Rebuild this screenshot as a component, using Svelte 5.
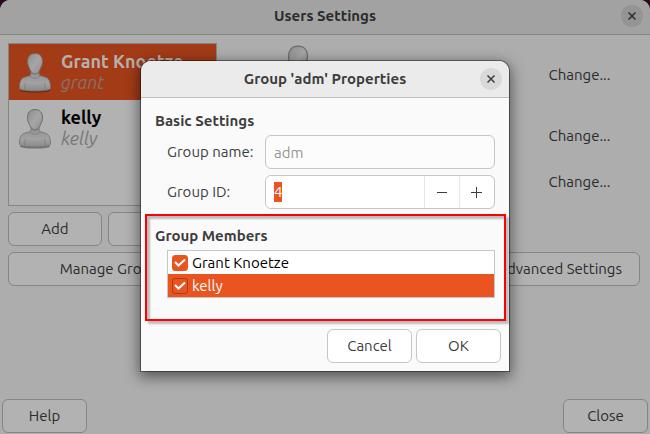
<script lang="ts">
	import { onMount } from 'svelte';

	let users = [
		{ name: 'Grant Knoetze', login: 'grant' },
		{ name: 'kelly', login: 'kelly' }
	];
	let members = [
		{ name: 'Grant Knoetze', checked: true },
		{ name: 'kelly', checked: true }
	];
	let selectedUser = 0;
	let selectedMember = 1;
	let groupName = 'adm';
	let groupId = 4;
	let idInput: HTMLInputElement;

	onMount(() => {
		idInput.focus();
		idInput.select();
	});
</script>

{#snippet avatar(size, box)}
	<svg class="avatar" width={size} height={size} viewBox={box} aria-hidden="true">
		<defs>
			<linearGradient id="body{size}" x1="0" y1="0" x2="0" y2="1">
				<stop offset="0" stop-color="#8e8e8e" />
				<stop offset="0.6" stop-color="#a2a2a2" />
				<stop offset="1" stop-color="#898989" />
			</linearGradient>
			<linearGradient id="head{size}" x1="0" y1="0" x2="1" y2="1">
				<stop offset="0" stop-color="#8c8c8c" />
				<stop offset="0.5" stop-color="#a6a6a6" />
				<stop offset="1" stop-color="#8f8f8f" />
			</linearGradient>
		</defs>
		<ellipse cx="24" cy="42.5" rx="15" ry="2" fill="#000" opacity="0.35" />
		<path
			d="M20 23v2c0 2-1 3-4 3.500-5 1-7 3-7.500 9.500v2c0 2 5 3 15.500 3s15.500-1 15.500-3v-2c-.5-6.500-2.500-8.500-7.500-9.500-3-.5-4-1.500-4-3.500v-2z"
			fill="url(#body{size})"
			stroke="#707070"
			stroke-width="0.8"
		/>
		<path d="M13.500 42l.8-7M34.500 42l-.8-7" fill="none" stroke="#7c7c7c" stroke-width="0.8" />
		<path d="M19 28c2 3 8 3 10 0" fill="none" stroke="#7c7c7c" stroke-width="0.8" />
		<path
			d="M24 5.500c-5 0-7.500 3.500-7.500 8 0 3 1 5 2 7 1 3 3 5.500 5.500 5.500s4.500-2.500 5.500-5.500c1-2 2-4 2-7 0-4.500-2.500-8-7.500-8z"
			fill="url(#head{size})"
			stroke="#6a6a6a"
		/>
	</svg>
{/snippet}

{#snippet cross()}
	<svg width="8" height="8" viewBox="0 0 8 8" aria-hidden="true">
		<path d="M.5.5l7 7M7.5.5l-7 7" fill="none" stroke="currentColor" stroke-width="1.5" />
	</svg>
{/snippet}

<div class="desktop">
	<main class="window">
		<header class="titlebar">
			<h1>Users Settings</h1>
			<button class="close" aria-label="Close window">{@render cross()}</button>
		</header>

		<div class="content">
			<div class="sidebar">
				<ul class="users">
					{#each users as user, i}
						<li class:selected={i === selectedUser}>
							{@render avatar(48, '0 0 48 48')}
							<div>
								<strong>{user.name}</strong>
								<em>{user.login}</em>
							</div>
						</li>
					{/each}
				</ul>
				<div class="pair">
					<button class="btn">Add</button>
					<button class="btn" aria-label="Delete"></button>
				</div>
				<button class="btn">Manage Groups</button>
			</div>

			<div class="details">
				<div class="detail first">
					{@render avatar(56, '2 3 44 44')}
					<button class="flat">Change...</button>
				</div>
				<div class="detail"><button class="flat">Change...</button></div>
				<div class="detail"><button class="flat">Change...</button></div>
				<button class="btn advanced">Advanced Settings</button>
			</div>
		</div>

		<footer>
			<button class="btn small">Help</button>
			<button class="btn small">Close</button>
		</footer>
	</main>

	<div class="dialog" role="dialog" aria-labelledby="dialog-title">
		<header class="titlebar">
			<h2 id="dialog-title">Group '{groupName}' Properties</h2>
			<button class="close" aria-label="Close dialog">{@render cross()}</button>
		</header>

		<section class="basic">
			<h3>Basic Settings</h3>
			<div class="field">
				<label for="group-name">Group name:</label>
				<input id="group-name" type="text" value={groupName} disabled />
			</div>
			<div class="field">
				<label for="group-id">Group ID:</label>
				<div class="spin">
					<input id="group-id" type="text" inputmode="numeric" bind:value={groupId} bind:this={idInput} />
					<button aria-label="Decrease" on:click={() => groupId--}>
						<svg width="12" height="12" viewBox="0 0 12 12"><path d="M1 6.5h10" stroke="currentColor" /></svg>
					</button>
					<button aria-label="Increase" on:click={() => groupId++}>
						<svg width="12" height="12" viewBox="0 0 12 12"><path d="M0 6.5h11M5.5 1v11" stroke="currentColor" /></svg>
					</button>
				</div>
			</div>
		</section>

		<section class="members">
			<h3>Group Members</h3>
			<ul>
				{#each members as member, i}
					<li class:selected={i === selectedMember}>
						<label>
							<input type="checkbox" bind:checked={member.checked} />
							{member.name}
						</label>
					</li>
				{/each}
			</ul>
		</section>

		<div class="actions">
			<button class="btn small">Cancel</button>
			<button class="btn small">OK</button>
		</div>
	</div>
</div>

<style>
	:global(body) {
		background: #2a0a20;
	}

	.desktop {
		position: relative;
		font: 15px/20px Ubuntu, "Noto Sans", sans-serif;
		color: #3d3d3d;
	}

	.desktop * {
		box-sizing: border-box;
	}

	h1,
	h2,
	h3,
	ul {
		margin: 0;
		padding: 0;
		list-style: none;
		font-size: 15px;
	}

	button,
	input {
		margin: 0;
		font: inherit;
		color: inherit;
	}

	button {
		padding: 0;
		border: 0;
		background: none;
		white-space: nowrap;
	}

	svg {
		display: block;
		flex: none;
	}

	.window {
		display: flex;
		flex-direction: column;
		box-sizing: border-box;
		min-height: 100vh;
		border-radius: 10px 10px 0 0;
		background: #adadad;
		color: #2b2b2b;
	}

	.titlebar {
		display: grid;
		grid-template-columns: 1fr auto 1fr;
		align-items: center;
		height: 35px;
		padding: 0 7px 2px;
		border-bottom: 1px solid #858585;
		border-radius: 10px 10px 0 0;
		background: #a2a2a2;
	}

	.titlebar h1,
	.titlebar h2 {
		grid-column: 2;
	}

	.close {
		display: grid;
		place-items: center;
		justify-self: end;
		width: 22px;
		height: 22px;
		border-radius: 50%;
		background: #949494;
	}

	.content {
		display: grid;
		grid-template-columns: 209px 1fr;
		gap: 48px;
		padding: 8px 10px 8px 8px;
	}

	.sidebar {
		display: flex;
		flex-direction: column;
		gap: 6px;
	}

	.users {
		height: 163px;
		border: 1px solid #858585;
		background: #b2b2b2;
	}

	.users li {
		display: flex;
		align-items: center;
		gap: 2px;
		height: 56px;
		padding-left: 2px;
		white-space: nowrap;
	}

	.users strong,
	.users em {
		display: block;
		font-size: 18px;
		line-height: 21px;
	}

	.users strong {
		color: #000;
	}

	.users em {
		color: #777;
	}

	.users .selected {
		background: #a33b17;
	}

	.users .selected strong {
		color: #b8b0ac;
	}

	.users .selected em {
		color: #8a7168;
	}

	.btn {
		height: 34px;
		padding: 0 17px;
		border: 1px solid #858585;
		border-radius: 6px;
		background: #b2b2b2;
	}

	.small {
		width: 85px;
		padding: 0;
	}

	.pair {
		display: grid;
		grid-template-columns: 94px 1fr;
		gap: 6px;
	}

	.details {
		display: flex;
		flex-direction: column;
		gap: 12px;
	}

	.detail {
		display: flex;
		justify-content: flex-end;
		align-items: center;
		height: 34px;
		padding: 0 18px 0 5px;
	}

	.first {
		justify-content: space-between;
		height: 64px;
	}

	.first .avatar {
		align-self: flex-start;
	}

	.flat {
		width: 85px;
		height: 34px;
	}

	.advanced {
		align-self: flex-end;
		margin-top: auto;
	}

	footer {
		display: flex;
		justify-content: space-between;
		margin-top: auto;
		padding: 0 2px 1px;
	}

	.dialog {
		position: absolute;
		top: 61px;
		left: 0;
		right: 0;
		width: min(368px, 96%);
		margin: 0 auto;
		border-radius: 10px 10px 0 0;
		background: #fafafa;
		box-shadow: 0 0 0 1px rgba(0, 0, 0, 0.4), 0 4px 14px 2px rgba(0, 0, 0, 0.5);
	}

	.dialog .titlebar {
		height: 37px;
		padding-bottom: 0;
		border-color: #bfbfbf;
		background: #ebebeb;
	}

	.dialog .close {
		background: #d9d9d9;
	}

	.basic {
		display: flex;
		flex-direction: column;
		gap: 6px;
		padding: 13px 14px 5px;
	}

	.basic h3 {
		margin-bottom: -2px;
	}

	.field {
		display: grid;
		grid-template-columns: 98px 1fr;
		align-items: center;
		padding-left: 12px;
	}

	.field input {
		width: 100%;
		min-width: 0;
		height: 34px;
		padding: 0 8px;
		border: 1px solid #c6c6c6;
		border-radius: 6px;
		background: #fff;
		outline: 0;
	}

	.field input:disabled {
		background: #fcfcfc;
		color: #959595;
	}

	.field input::selection {
		background: #e95420;
		color: #fff;
	}

	.spin {
		display: flex;
		height: 34px;
		border: 1px solid #c6c6c6;
		border-radius: 6px;
		background: #fff;
	}

	.spin input {
		flex: 1;
		height: auto;
		border: 0;
	}

	.spin button {
		display: grid;
		place-items: center;
		flex: none;
		width: 35px;
		border-left: 1px solid #e6e6e6;
	}

	.members {
		margin: 0 3px 0 4px;
		padding: 10px 9px 21px 8px;
		border: 2px solid #f00;
		box-shadow: 3px 3px 2px rgba(0, 0, 0, 0.25), inset 3px 3px 2px rgba(0, 0, 0, 0.25);
	}

	.members ul {
		margin: 4px 0 0 12px;
		border: 1px solid #c6c6c6;
		background: #fff;
		color: #000;
	}

	.members label {
		display: flex;
		align-items: center;
		gap: 4px;
		height: 23px;
		padding-left: 4px;
	}

	.members .selected {
		background: #e95420;
		color: #fff;
	}

	.members input {
		appearance: none;
		width: 16px;
		height: 16px;
		border: 1px solid #e95420;
		border-radius: 3px;
	}

	.members input:checked {
		background: #e95420 url("data:image/svg+xml,%3Csvg xmlns='http://www.w3.org/2000/svg' viewBox='0 0 14 14'%3E%3Cpath d='M2 6l3.5 3.5L12 3.5' fill='none' stroke='white' stroke-width='2'/%3E%3C/svg%3E");
	}

	.members .selected input {
		border-color: #b03c12;
	}

	.actions {
		display: flex;
		justify-content: flex-end;
		gap: 4px;
		padding: 8px;
	}

	.actions .btn {
		border-color: #c6c6c6;
		background: #fff;
	}
</style>
